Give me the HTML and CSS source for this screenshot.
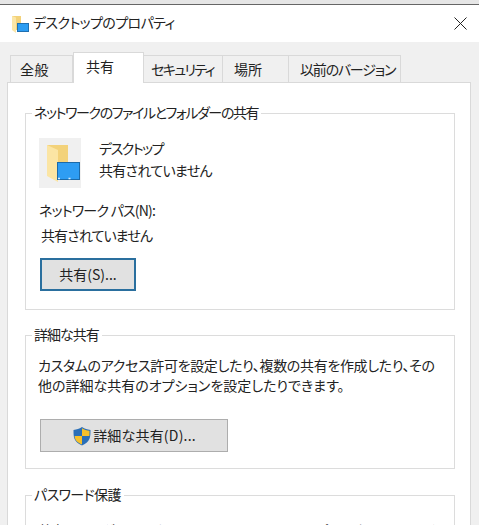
FILE: index.html
```html
<!DOCTYPE html>
<html lang="ja">
<head>
<meta charset="utf-8">
<title>デスクトップのプロパティ</title>
<link rel="stylesheet" href="styles.css">
</head>
<body>
<div class="window">
  <div class="backdrop"></div>
  <header class="titlebar">
    <svg class="title-icon" width="17" height="17" viewBox="0 0 17 17">
      <path d="M0 0h9v14H3z" fill="#f3d27a"/>
      <path d="M0 0l4 1.500V17L0 14z" fill="#fbe6a6"/>
      <rect x="5.500" y="7.500" width="11" height="8" fill="#2b9cf2" stroke="#1f6fb0"/>
    </svg>
    <span class="title-text">デスクトップのプロパティ</span>
    <svg class="close" width="13" height="13" viewBox="0 0 13 13"><path d="M.5.5l12 12M12.500.5l-12 12" stroke="#222" stroke-width="1" fill="none"/></svg>
  </header>
  <div class="content">
    <nav class="tabs">
      <div class="tab t1">全般</div>
      <div class="tab t2 active">共有</div>
      <div class="tab t3">セキュリティ</div>
      <div class="tab t4">場所</div>
      <div class="tab t5">以前のバージョン</div>
    </nav>
    <main class="panel">
      <section class="group g1">
        <h2 class="legend">ネットワークのファイルとフォルダーの共有</h2>
        <div class="share-head">
          <div class="big-icon">
            <svg width="42" height="50" viewBox="0 0 42 50">
              <path d="M8 7h21v32H19z" fill="#f3d27a"/>
              <path d="M8 7l11 5v32L8 38z" fill="#fbe5a4"/>
              <rect x="18.500" y="24.500" width="22" height="17" fill="#2e9df3" stroke="#1c6aa8"/>
              <path d="M19 40.500h21" stroke="#d8efff" stroke-width="1.500" stroke-dasharray="2 8.500"/>
            </svg>
          </div>
          <div class="share-name">
            <div class="name-line">デスクトップ</div>
            <div class="status-line">共有されていません</div>
          </div>
        </div>
        <div class="path-label">ネットワーク パス(N):</div>
        <div class="path-value">共有されていません</div>
        <button class="btn btn-share">共有(S)...</button>
      </section>
      <section class="group g2">
        <h2 class="legend">詳細な共有</h2>
        <p class="desc"><span class="line-a">カスタムのアクセス許可を設定したり、複数の共有を作成したり、その</span>他の詳細な共有のオプションを設定したりできます。</p>
        <button class="btn btn-adv">
          <svg width="20" height="20" viewBox="0 0 20 20">
            <path d="M10 1c3 2 5 2.500 8.500 3 0 7 0 11.500-8.500 15.500C1.500 15.500 1.500 11 1.500 4 5 3.500 7 3 10 1z" fill="#2a6fb8"/>
            <path d="M10 2.200V10h7.400c.1-1.700.1-3.300.1-5.200-3-.5-5-1-7.500-2.600zM10 10H2.600c.3 4 2.200 6.500 7.400 8.400z" fill="#f5c02c"/>
          </svg>
          <span>詳細な共有(D)...</span>
        </button>
      </section>
      <section class="group g3">
        <h2 class="legend">パスワード保護</h2>
        <p class="desc">共有フォルダーにアクセスできるのは、このコンピューターのユーザー アカウントと</p>
      </section>
    </main>
  </div>
</div>
</body>
</html>
```
FILE: styles.css
```css
html, body {
  margin: 0;
  height: 525px;
  overflow: hidden;
  background: #f0f0f0;
}
body, button, h2, p {
  font-family: "Noto Sans CJK JP", "Noto Sans", sans-serif;
  font-size: 14px;
  font-weight: 400;
  color: #222;
  font-feature-settings: "palt";
}
.window {
  height: 525px;
  display: flex;
  flex-direction: column;
}
.backdrop {
  height: 4px;
  background: #e6e6e6;
  flex-shrink: 0;
}
.titlebar {
  box-sizing: border-box;
  height: 38px;
  border-top: 1px solid #666;
  background: #fff;
  display: flex;
  align-items: center;
  flex-shrink: 0;
  padding: 0 12px 0 12px;
}
.title-icon { margin: 2px 4px 0 0; flex-shrink: 0; }
.title-text { flex: 1; line-height: 20px; letter-spacing: -0.6px; margin-bottom: 3px; }
.close { margin-bottom: 1px; }
.content {
  flex: 1;
  padding: 10px 8px 0 7px;
  display: flex;
  flex-direction: column;
  overflow: hidden;
}
.tabs {
  display: flex;
  align-items: flex-end;
  padding-left: 3px;
  height: 30px;
  flex-shrink: 0;
  position: relative;
  z-index: 1;
}
.tab {
  height: 27px;
  box-sizing: border-box;
  border: 1px solid #d9d9d9;
  border-bottom: 0;
  border-left-width: 0;
  background: #f0f0f0;
  display: flex;
  align-items: center;
  white-space: nowrap;
  line-height: 20px;
}
.t1 { width: 63px; border-left-width: 1px; padding-left: 9px; letter-spacing: 0.4px; }
.t2 { width: 71px; height: 31px; background: #fff; border-left-width: 1px; margin-bottom: -1px; padding: 0 0 5px 12px; }
.t3 { width: 79px; padding-left: 7px; letter-spacing: -1.6px; }
.t4 { width: 66px; padding-left: 11px; }
.t5 { width: 112px; padding-left: 11px; letter-spacing: -1.2px; }
.panel {
  flex: 1;
  background: #fff;
  border: 1px solid #d9d9d9;
  border-bottom: 0;
  padding: 30px 15px 0 17px;
  display: flex;
  flex-direction: column;
  gap: 25px;
}
.group {
  box-sizing: border-box;
  border: 1px solid #dcdcdc;
  position: relative;
  flex-shrink: 0;
  padding: 0 14px;
}
.legend {
  position: absolute;
  left: 6px;
  top: -12px;
  margin: 0;
  padding: 0 3px 0 2px;
  background: #fff;
  line-height: 20px;
}
.g1 { height: 197px; }
.g1 .legend { letter-spacing: -1.4px; }
.g2 { height: 134px; }
.g2 .legend { letter-spacing: -1px; }
.g3 { height: 60px; margin-top: 1px; }
.g3 .legend { letter-spacing: -0.6px; }
.share-head { display: flex; margin: 24px 0 0 -1px; }
.big-icon { width: 42px; height: 50px; background: #f0f0f0; }
.big-icon svg { display: block; }
.share-name { margin: -1px 0 0 18px; line-height: 22px; }
.name-line { letter-spacing: -1.5px; }
.status-line { letter-spacing: -0.7px; }
.path-label { margin: 10px 0 0 -1px; line-height: 24px; letter-spacing: -0.8px; }
.path-value { line-height: 26px; padding-left: 1px; letter-spacing: -0.9px; margin-bottom: 1px; }
.btn {
  display: flex;
  align-items: center;
  justify-content: center;
  box-sizing: border-box;
  background: #e1e1e1;
  padding: 0 0 2px;
}
.btn-share { margin-top: 10px; width: 96px; height: 33px; border: 2px solid #2a6f9e; }
.desc { margin: 0 0 0 -2px; padding-top: 19px; line-height: 20px; white-space: nowrap; }
.line-a { display: block; letter-spacing: -0.33px; }
.btn-adv { margin-top: 24px; width: 188px; height: 33px; border: 1px solid #adadad; letter-spacing: 0.2px; gap: 1px; }
.btn-adv svg { flex-shrink: 0; margin-top: 2px; }
.g3 .desc { padding-top: 24px; }
```
